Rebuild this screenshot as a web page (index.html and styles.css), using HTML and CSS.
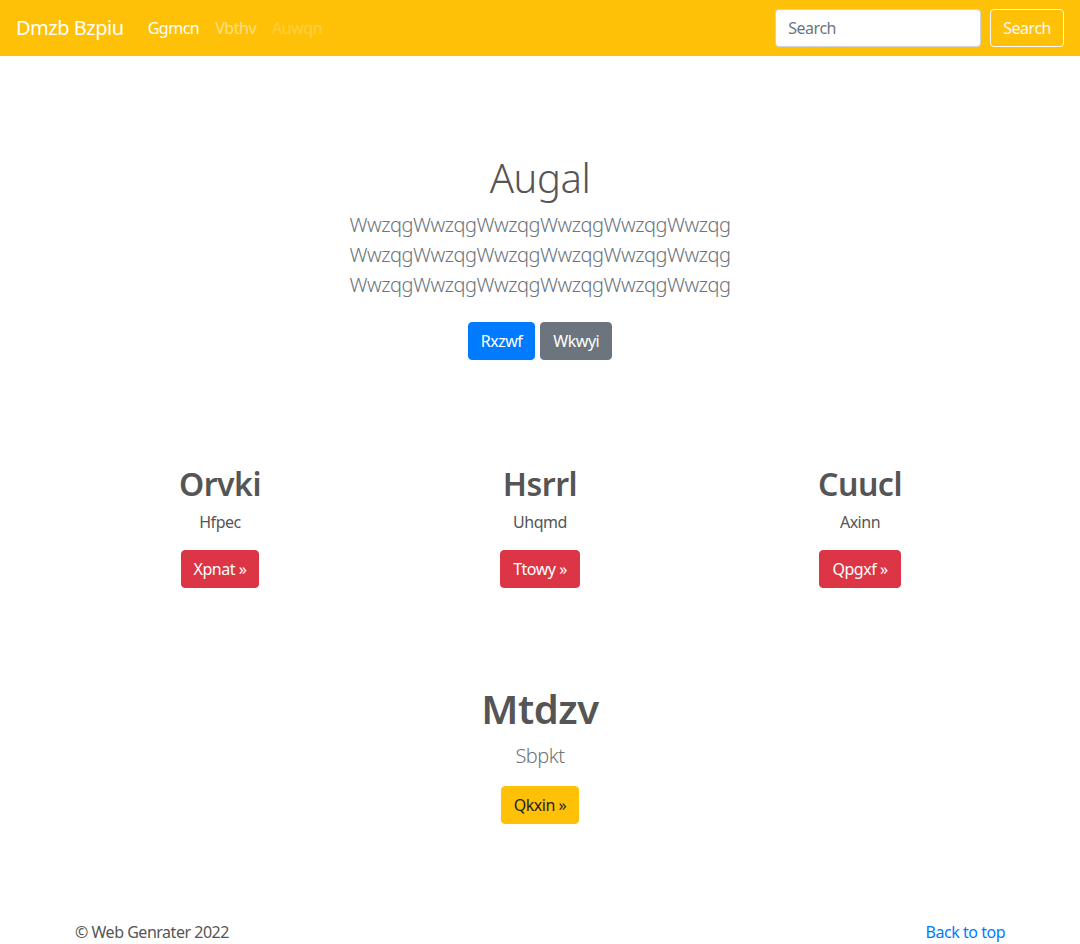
FILE: index.html
```html
<!DOCTYPE html>
<html lang="en">
<head>
<meta charset="utf-8">
<title>Dmzb Bzpiu</title>
<link rel="stylesheet" href="styles.css">
</head>
<body>
<header class="navbar">
  <div class="nav-left">
    <a class="brand" href="#">Dmzb Bzpiu</a>
    <nav class="nav-links">
      <a class="nav-link active" href="#">Ggmcn</a>
      <a class="nav-link" href="#">Vbthv</a>
      <a class="nav-link disabled" href="#">Auwqn</a>
    </nav>
  </div>
  <form class="search-form">
    <input class="search-input" type="text" placeholder="Search">
    <button class="btn btn-outline-light" type="button">Search</button>
  </form>
</header>

<main>
  <section class="jumbotron">
    <div class="jumbo-inner">
      <h1 class="jumbo-heading">Augal</h1>
      <p class="lead muted">WwzqgWwzqgWwzqgWwzqgWwzqgWwzqg WwzqgWwzqgWwzqgWwzqgWwzqgWwzqg WwzqgWwzqgWwzqgWwzqgWwzqgWwzqg</p>
      <div class="jumbo-actions">
        <a class="btn btn-primary" href="#">Rxzwf</a>
        <a class="btn btn-secondary" href="#">Wkwyi</a>
      </div>
    </div>
  </section>

  <section class="features">
    <div class="feature">
      <h2 class="feature-title">Orvki</h2>
      <p class="feature-text">Hfpec</p>
      <a class="btn btn-danger" href="#">Xpnat &raquo;</a>
    </div>
    <div class="feature">
      <h2 class="feature-title">Hsrrl</h2>
      <p class="feature-text">Uhqmd</p>
      <a class="btn btn-danger" href="#">Ttowy &raquo;</a>
    </div>
    <div class="feature">
      <h2 class="feature-title">Cuucl</h2>
      <p class="feature-text">Axinn</p>
      <a class="btn btn-danger" href="#">Qpgxf &raquo;</a>
    </div>
  </section>

  <section class="highlight">
    <h2 class="highlight-title">Mtdzv</h2>
    <p class="lead muted">Sbpkt</p>
    <a class="btn btn-warning" href="#">Qkxin &raquo;</a>
  </section>
</main>

<footer class="footer">
  <p class="copy">&copy; Web Genrater 2022</p>
  <a class="back-top" href="#">Back to top</a>
</footer>
</body>
</html>
```

FILE: styles.css
```css
* { box-sizing: border-box; }

html, body {
  margin: 0;
  padding: 0;
}

body {
  font-family: "Noto Sans", "Open Sans", "Liberation Sans", sans-serif;
  font-size: 16px;
  line-height: 1.5;
  letter-spacing: -0.03em;
  color: #555;
  background: #fff;
  height: 944px;
  overflow: hidden;
}

a { text-decoration: none; }

.navbar {
  height: 56px;
  background: #ffc107;
  display: flex;
  align-items: center;
  justify-content: space-between;
  padding: 0 16px;
}

.nav-left {
  display: flex;
  align-items: center;
}

.brand {
  color: #fff;
  font-size: 20px;
  line-height: 30px;
  margin-right: 16px;
}

.nav-links {
  display: flex;
}

.nav-link {
  color: rgba(255, 255, 255, 0.5);
  padding: 8px 8px;
  line-height: 24px;
}

.nav-link.active { color: #fff; }
.nav-link.disabled { color: rgba(255, 255, 255, 0.25); }

.search-form {
  display: flex;
  align-items: center;
  gap: 9px;
}

.search-input {
  width: 206px;
  height: 38px;
  border: 1px solid #ced4da;
  border-radius: 4px;
  padding: 6px 12px;
  font: inherit;
  font-size: 16px;
  letter-spacing: -0.03em;
  color: #495057;
  background: #fff;
}

.search-input::placeholder { color: #6c757d; }

.btn {
  display: inline-block;
  font: inherit;
  font-size: 16px;
  line-height: 24px;
  letter-spacing: -0.03em;
  padding: 6px 12px;
  border: 1px solid transparent;
  border-radius: 4px;
  color: #fff;
  cursor: pointer;
  text-align: center;
}

.btn-outline-light {
  background: transparent;
  border-color: #f8f9fa;
  color: #f8f9fa;
}

.btn-primary { background: #007bff; border-color: #007bff; }
.btn-secondary { background: #6c757d; border-color: #6c757d; }
.btn-danger { background: #dc3545; border-color: #dc3545; }
.btn-warning { background: #ffc107; border-color: #ffc107; color: #212529; }

.jumbotron {
  padding: 98px 16px 0;
  text-align: center;
}

.jumbo-inner {
  max-width: 640px;
  margin: 0 auto;
}

.jumbo-heading {
  font-size: 40px;
  font-weight: 300;
  line-height: 48px;
  margin: 0 0 8px;
}

.lead {
  font-size: 20px;
  font-weight: 300;
  line-height: 30px;
  margin: 0;
}

.muted { color: #6c757d; }

.jumbo-actions {
  display: flex;
  justify-content: center;
  gap: 5px;
  margin-top: 22px;
}

.features {
  display: grid;
  grid-template-columns: repeat(3, 320px);
  justify-content: center;
  margin-top: 105px;
  text-align: center;
}

.feature-title {
  font-size: 32px;
  font-weight: 600;
  line-height: 38px;
  margin: 0 0 7px;
}

.feature-text {
  margin: 0 0 16px;
}

.highlight {
  text-align: center;
  margin-top: 97px;
}

.highlight-title {
  font-size: 40px;
  font-weight: 600;
  line-height: 48px;
  margin: 0 0 8px;
}

.highlight .lead { margin-bottom: 15px; }

.footer {
  width: 960px;
  margin: 96px auto 0;
  padding: 0 15px;
  display: flex;
  justify-content: space-between;
  align-items: center;
}

.copy { margin: 0; }

.back-top { color: #007bff; }
```
